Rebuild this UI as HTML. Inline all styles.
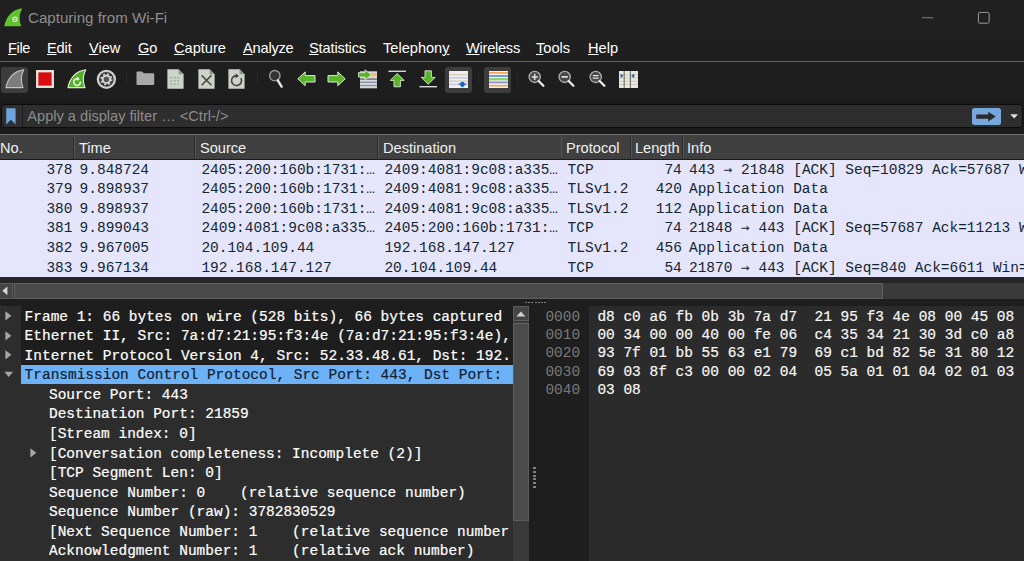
<!DOCTYPE html>
<html><head><meta charset="utf-8"><title>Capturing from Wi-Fi</title>
<style>
*{box-sizing:border-box;margin:0;padding:0}
html,body{width:1024px;height:561px;overflow:hidden;background:#1e1e1e}
body{position:relative;font-family:"Liberation Sans",sans-serif;color:#fff}
.abs{position:absolute}
svg{position:absolute;overflow:visible}
#title{left:0;top:0;width:1024px;height:34px;background:#202020}
#title .t{left:28px;top:9px;font-size:15.1px;color:#8e8e8e;white-space:nowrap}
#menu{left:0;top:34px;width:1024px;height:28px;background:#1f1f1f;border-bottom:1px solid #606060}
#menu span{position:absolute;top:6.1px;font-size:14.6px;color:#fff;white-space:nowrap}
#menu u{text-decoration:underline;text-underline-offset:1.2px;text-decoration-thickness:1px}
#tb{left:0;top:62px;width:1024px;height:38px;background:#1e1e1e}
.chk{position:absolute;background:#3d3d3d;border-radius:3px}
.sep{position:absolute;top:72px;width:1px;height:14px;background:#2a2a2a}
#fwrap{left:0;top:100px;width:1024px;height:34px;background:#1b1b1b}
#filter{left:1px;top:104px;width:1022px;height:24px;background:#2e2e2e;border:1px solid #0c0c0c;border-radius:4px}
#filter .ph{left:25.3px;top:3.3px;font-size:14.6px;color:#8c8c8c;white-space:nowrap}
.mono{font-family:"Liberation Mono",monospace}
#hdr{left:0;top:133.5px;width:1024px;height:26px;background:#404040;border-top:1px solid #707070;border-bottom:1.5px solid #1a1a1a}
#hdr span{position:absolute;top:5.8px;font-size:14.6px;color:#f0f0f0;white-space:nowrap}
#hdr i{position:absolute;top:1px;width:1.5px;height:22px;background:#2c2c2c;border-right:0.5px solid #555}
#list{left:0;top:160px;width:1024px;height:117px;background:#e6e5fe;overflow:hidden}
.row{position:absolute;left:0;width:1024px;height:19.6px;line-height:19.6px;font-size:14.47px;color:#12272e;white-space:pre}
.row>span{position:absolute;top:0.6px;white-space:pre}
.ar{font-family:"DejaVu Sans Mono",monospace;font-size:14.42px;line-height:0}
#hsbw{left:0;top:277px;width:1024px;height:6px;background:#262626}
#hsb{left:0;top:283px;width:1024px;height:15.5px;background:#3a3a3a}
#det{left:0;top:306.3px;width:513px;height:255px;background:#2d2d2d;overflow:hidden}
.top3{position:absolute;left:20.5px;top:0;width:500px;height:58.5px;background:#1e1e1e}
.selbg{position:absolute;left:20.5px;top:58.5px;width:500px;height:19.3px;background:#6db2f6}
.dl{position:absolute;overflow:hidden;height:19.5px;line-height:19.5px;font-size:14.47px;color:#fff;white-space:pre;margin-top:1.4px;-webkit-text-stroke:0.2px #fff}
.dl.sel{color:#14202e;-webkit-text-stroke:0.2px #14202e}
#vsb{left:513px;top:306px;width:16px;height:255px;background:#3a3a3a}
#hexoff{left:529px;top:306px;width:60px;height:255px;background:#1e1e1e}
#hex{left:589px;top:306px;width:435px;height:255px;background:#2b2b2b}
.hl{position:absolute;font-size:14.47px;line-height:18.3px;white-space:pre}
</style></head><body>
<div id="title" class="abs"><div class="abs t">Capturing from Wi-Fi</div>
<svg style="left:4px;top:8px" width="19" height="19" viewBox="0 0 19 19"><path d="M0.3 18.2 C2 9 8 1.5 18.3 0.2 C15 6 15 12 17.3 18.2 Z" fill="#5fc42b"/><circle cx="11" cy="11.3" r="2.2" fill="none" stroke="#dfe8d8" stroke-width="1.2"/><circle cx="11" cy="11.3" r="0.8" fill="#dfe8d8"/></svg>
<svg style="left:922px;top:16.5px" width="12" height="2" viewBox="0 0 12 2"><rect x="0" y="0.3" width="11.2" height="0.9" fill="#8c8c8c"/></svg>
<svg style="left:977px;top:11px" width="14" height="14" viewBox="0 0 14 14"><rect x="1.4" y="1.4" width="10.8" height="10.8" rx="1.6" fill="none" stroke="#9a9a9a" stroke-width="1"/></svg>
</div>
<div id="menu" class="abs">
<span style="left:8px;letter-spacing:-0.35px"><u>F</u>ile</span>
<span style="left:47px;letter-spacing:-0.15px"><u>E</u>dit</span>
<span style="left:89px"><u>V</u>iew</span>
<span style="left:138px"><u>G</u>o</span>
<span style="left:174px"><u>C</u>apture</span>
<span style="left:243px;letter-spacing:-0.2px"><u>A</u>nalyze</span>
<span style="left:309px;letter-spacing:-0.14px"><u>S</u>tatistics</span>
<span style="left:383px">Telephon<u>y</u></span>
<span style="left:466px;letter-spacing:-0.25px"><u>W</u>ireless</span>
<span style="left:536px"><u>T</u>ools</span>
<span style="left:588px"><u>H</u>elp</span>
</div>
<div id="tb" class="abs"></div>
<div class="chk" style="left:1px;top:67px;width:27px;height:26px"></div>
<div class="chk" style="left:445px;top:67px;width:27px;height:26px"></div>
<div class="chk" style="left:484px;top:67px;width:27px;height:26px"></div>
<div class="sep" style="left:126px"></div><div class="sep" style="left:257px"></div><div class="sep" style="left:478px"></div><div class="sep" style="left:517px"></div>
<!-- start capture (grey fin) -->
<svg style="left:5px;top:69px" width="20" height="20" viewBox="0 0 20 20"><path d="M1 18.6 C2.5 9.5 8.5 2.2 18.8 0.8 C15.6 6.5 15.6 12.5 18 18.6 Z" fill="#7d7d7d" stroke="#c4c4c4" stroke-width="1.1" stroke-linejoin="round"/></svg>
<!-- stop -->
<svg style="left:36.3px;top:70px" width="18" height="18" viewBox="0 0 18 18"><rect x="1.2" y="1.2" width="15.6" height="15.6" rx="0" fill="#d70f10" stroke="#eee6de" stroke-width="2.3"/></svg>
<!-- restart -->
<svg style="left:66.5px;top:69px" width="20" height="20" viewBox="0 0 20 20"><path d="M1 18.6 C2.5 9.5 8.5 2.2 18.8 0.8 C15.6 6.5 15.6 12.5 18 18.6 Z" fill="#52b027" stroke="#e8efe2" stroke-width="1.1" stroke-linejoin="round"/><path d="M13.4 12.4 A3.4 3.4 0 1 1 10.4 9.7" fill="none" stroke="#eef4ea" stroke-width="1.6"/><path d="M9.8 7.6 L12.9 9.9 L9.8 12Z" fill="#eef4ea"/></svg>
<!-- options gear -->
<svg style="left:96px;top:68.5px" width="21" height="21" viewBox="0 0 21 21"><circle cx="10.4" cy="10.3" r="8.5" fill="#333" stroke="#cfcfcf" stroke-width="2.3"/><circle cx="10.4" cy="10.3" r="3.7" fill="none" stroke="#cfcfcf" stroke-width="2.2"/><circle cx="10.4" cy="10.3" r="5.3" fill="none" stroke="#cfcfcf" stroke-width="1.5" stroke-dasharray="2.08 2.08"/><circle cx="10.4" cy="10.3" r="2.4" fill="#5e5555"/></svg>
<!-- open folder -->
<svg style="left:136px;top:71px" width="19" height="15" viewBox="0 0 19 15"><path d="M0.5 1.2 Q0.5 0.4 1.3 0.4 L6.2 0.4 L7.8 2.2 L17.4 2.2 Q18.2 2.2 18.2 3 L18.2 13 Q18.2 13.9 17.4 13.9 L1.3 13.9 Q0.5 13.9 0.5 13 Z" fill="#a9a9a9"/></svg>
<!-- save file -->
<svg style="left:167px;top:69px" width="17" height="20" viewBox="0 0 17 20"><path d="M0.4 0.3 L11.6 0.3 L16.6 5.3 L16.6 19.7 L0.4 19.7Z" fill="#cdd3cc"/><path d="M11.6 0.3 L11.6 5.3 L16.6 5.3Z" fill="#8e958e"/><g fill="#a3aaa3"><rect x="3" y="8" width="2.2" height="1.3"/><rect x="6.6" y="8" width="2.2" height="1.3"/><rect x="10.2" y="8" width="2.2" height="1.3"/><rect x="3" y="11.2" width="2.2" height="1.3"/><rect x="6.6" y="11.2" width="2.2" height="1.3"/><rect x="10.2" y="11.2" width="2.2" height="1.3"/><rect x="3" y="14.4" width="2.2" height="1.3"/><rect x="6.6" y="14.4" width="2.2" height="1.3"/><rect x="10.2" y="14.4" width="2.2" height="1.3"/></g></svg>
<!-- close file -->
<svg style="left:198px;top:69px" width="17" height="20" viewBox="0 0 17 20"><path d="M0.4 0.3 L11.6 0.3 L16.6 5.3 L16.6 19.7 L0.4 19.7Z" fill="#cdd3cc"/><path d="M11.6 0.3 L11.6 5.3 L16.6 5.3Z" fill="#8e958e"/><path d="M3.6 6.4 L13.4 16.2 M13.4 6.4 L3.6 16.2" stroke="#4a4444" stroke-width="1.5"/></svg>
<!-- reload file -->
<svg style="left:228px;top:69px" width="17" height="20" viewBox="0 0 17 20"><path d="M0.4 0.3 L11.6 0.3 L16.6 5.3 L16.6 19.7 L0.4 19.7Z" fill="#cdd3cc"/><path d="M11.6 0.3 L11.6 5.3 L16.6 5.3Z" fill="#8e958e"/><path d="M12.9 9.2 A5 5 0 1 1 8.4 6.6" fill="none" stroke="#4a4444" stroke-width="1.6"/><path d="M7.6 4.2 L11 6.9 L7.6 9.4Z" fill="#4a4444"/></svg>
<!-- find -->
<svg style="left:267px;top:68px" width="18" height="22" viewBox="0 0 18 22"><circle cx="7.8" cy="7.7" r="5.2" fill="#333" stroke="#9a9a9a" stroke-width="1.4"/><path d="M10.8 12.3 L14.6 18.6" stroke="#e6e6e6" stroke-width="2.4" stroke-linecap="round"/></svg>
<!-- back -->
<svg style="left:297px;top:71px" width="19" height="16" viewBox="0 0 19 16"><path d="M0.8 7.8 L8.2 0.9 L8.2 4.6 L18 4.6 L18 11 L8.2 11 L8.2 14.7Z" fill="#58b528" stroke="#dfe9d6" stroke-width="1"/></svg>
<!-- forward -->
<svg style="left:327px;top:71px" width="19" height="16" viewBox="0 0 19 16"><path d="M18.2 7.8 L10.8 0.9 L10.8 4.6 L1 4.6 L1 11 L10.8 11 L10.8 14.7Z" fill="#58b528" stroke="#dfe9d6" stroke-width="1"/></svg>
<!-- goto packet -->
<svg style="left:358px;top:69px" width="20" height="20" viewBox="0 0 20 20"><rect x="2" y="2.3" width="17" height="17" fill="#d9dad6"/><rect x="2" y="9.4" width="17" height="1.4" fill="#6d6d6d"/><rect x="2" y="12.6" width="17" height="1.4" fill="#8a8fb0"/><rect x="2" y="15.8" width="17" height="1.4" fill="#8a8fb0"/><rect x="12.6" y="4" width="6" height="3.2" fill="#f3c064"/><path d="M0.5 3.6 L7 3.6 L7 0.8 L13.4 5.8 L7 10.8 L7 8 L0.5 8Z" fill="#58b528" stroke="#dfe9d6" stroke-width="0.8"/></svg>
<!-- first -->
<svg style="left:388px;top:70px" width="19" height="18" viewBox="0 0 19 18"><rect x="0.4" y="0.6" width="17.6" height="1.4" fill="#d6d6d6"/><path d="M9.2 3.6 L16.2 10.4 L12.4 10.4 L12.4 16.8 L6 16.8 L6 10.4 L2.2 10.4Z" fill="#58b528" stroke="#dfe9d6" stroke-width="0.9"/></svg>
<!-- last -->
<svg style="left:419px;top:70px" width="19" height="18" viewBox="0 0 19 18"><rect x="0.4" y="16" width="17.6" height="1.4" fill="#d6d6d6"/><path d="M9.2 14.2 L16.2 7.4 L12.4 7.4 L12.4 0.8 L6 0.8 L6 7.4 L2.2 7.4Z" fill="#58b528" stroke="#dfe9d6" stroke-width="0.9"/></svg>
<!-- autoscroll -->
<svg style="left:448.5px;top:70.5px" width="19" height="17" viewBox="0 0 19 17"><rect x="0" y="0" width="19" height="17" fill="#ecebf6"/><rect x="0" y="3.2" width="19" height="1" fill="#c9c79a"/><rect x="0" y="6.4" width="19" height="1" fill="#b9b9cc"/><rect x="0" y="9.6" width="19" height="1" fill="#c9c79a"/><rect x="0" y="12.8" width="19" height="1" fill="#b9b9cc"/><path d="M9.2 12.6 L17.6 12.6 L13.4 16.6Z" fill="#1c62b8"/><rect x="11.6" y="11" width="3.6" height="2" fill="#1c62b8"/></svg>
<!-- colorize -->
<svg style="left:488.5px;top:70.5px" width="19" height="17" viewBox="0 0 19 17"><rect x="0" y="0" width="19" height="17" fill="#f2f1f4"/><rect x="0" y="1" width="19" height="1.8" fill="#f0a862"/><rect x="0" y="4.2" width="19" height="1.6" fill="#5a82c8"/><rect x="0" y="7" width="19" height="2.4" fill="#8ed06a"/><rect x="0" y="10.6" width="19" height="1.6" fill="#8d88c8"/><rect x="0" y="13.8" width="19" height="1.8" fill="#f0a862"/></svg>
<!-- zoom in/out/reset -->
<svg style="left:527px;top:69px" width="20" height="20" viewBox="0 0 20 20"><circle cx="7.7" cy="7.9" r="5.6" fill="#484848" stroke="#b0b0b0" stroke-width="1.3"/><path d="M11.6 12 L16.4 16.8" stroke="#ececec" stroke-width="2.3" stroke-linecap="round"/><path d="M4.6 7.9 L10.8 7.9 M7.7 4.8 L7.7 11" stroke="#e2e2e2" stroke-width="1.5"/></svg>
<svg style="left:556.7px;top:69px" width="20" height="20" viewBox="0 0 20 20"><circle cx="7.7" cy="7.9" r="5.6" fill="#484848" stroke="#b0b0b0" stroke-width="1.3"/><path d="M11.6 12 L16.4 16.8" stroke="#ececec" stroke-width="2.3" stroke-linecap="round"/><path d="M4.6 7.9 L10.8 7.9" stroke="#e2e2e2" stroke-width="1.7"/></svg>
<svg style="left:587.6px;top:69px" width="20" height="20" viewBox="0 0 20 20"><circle cx="7.7" cy="7.9" r="5.6" fill="#484848" stroke="#b0b0b0" stroke-width="1.3"/><path d="M11.6 12 L16.4 16.8" stroke="#ececec" stroke-width="2.3" stroke-linecap="round"/><path d="M4.8 6.6 L10.6 6.6 M4.8 9.2 L10.6 9.2" stroke="#e2e2e2" stroke-width="1.3"/></svg>
<!-- resize columns -->
<svg style="left:618.5px;top:70.5px" width="19" height="17" viewBox="0 0 19 17"><rect x="0" y="0" width="19" height="17" fill="#e9e9e4"/><g fill="#c5c5b4"><rect x="0" y="3.4" width="19" height="0.8"/><rect x="0" y="6.6" width="19" height="0.8"/><rect x="0" y="9.8" width="19" height="0.8"/><rect x="0" y="13" width="19" height="0.8"/></g><rect x="4.6" y="0" width="1.2" height="17" fill="#77776e"/><rect x="10.8" y="0" width="1.2" height="17" fill="#77776e"/><path d="M1.6 2.4 L4.4 4.8 L1.6 7.2Z" fill="#1c62b8"/><path d="M15.2 2.4 L12.2 4.8 L15.2 7.2Z" fill="#1c62b8"/></svg>

<div id="fwrap" class="abs"></div>
<div id="filter" class="abs"><div class="abs ph">Apply a display filter … &lt;Ctrl-/&gt;</div></div>
<svg style="left:6.2px;top:107.6px" width="10" height="17" viewBox="0 0 10 17"><path d="M0.2 0.2 L9.6 0.2 L9.6 16.4 L4.9 11.8 L0.2 16.4Z" fill="#6ea4de"/></svg>
<div class="abs" style="left:21.5px;top:105px;width:1.5px;height:22px;background:#1c1c1c"></div>
<div class="abs" style="left:972px;top:108px;width:29px;height:17px;background:#76a8de;border-radius:2.5px"></div>
<svg style="left:975px;top:110px" width="22" height="13" viewBox="0 0 22 13"><path d="M1.2 4.5 L13.2 4.5 L13.2 1.8 L20.8 6.6 L13.2 11.4 L13.2 8.8 L1.2 8.8Z" fill="#2b2b2b"/></svg>
<svg style="left:1010px;top:113.5px" width="9" height="5" viewBox="0 0 9 5"><path d="M0.3 0.3 L8 0.3 L4.15 4.6Z" fill="#e2e2e2"/></svg>

<div id="hdr" class="abs">
<span style="left:0px">No.</span><span style="left:79px">Time</span><span style="left:200px">Source</span><span style="left:383px">Destination</span><span style="left:566px">Protocol</span><span style="left:635px">Length</span><span style="left:687px">Info</span>
<i style="left:73px"></i><i style="left:194px"></i><i style="left:377px"></i><i style="left:560.5px"></i><i style="left:630px"></i><i style="left:682px"></i>
</div>
<div id="list" class="abs mono">
<div class="row" style="top:0.0px"><span style="left:46.4px">378</span><span style="left:79.6px">9.848724</span><span style="left:201.4px">2405:200:160b:1731:…</span><span style="left:384.4px">2409:4081:9c08:a335…</span><span style="left:567.6px">TCP</span><span style="left:664.4px">74</span><span style="left:689px">443 <span class="ar">→</span> 21848 [ACK] Seq=10829 Ack=57687 Win=501 Len=0</span></div>
<div class="row" style="top:19.6px"><span style="left:46.4px">379</span><span style="left:79.6px">9.898937</span><span style="left:201.4px">2405:200:160b:1731:…</span><span style="left:384.4px">2409:4081:9c08:a335…</span><span style="left:567.6px">TLSv1.2</span><span style="left:655.8px">420</span><span style="left:689px">Application Data</span></div>
<div class="row" style="top:39.2px"><span style="left:46.4px">380</span><span style="left:79.6px">9.898937</span><span style="left:201.4px">2405:200:160b:1731:…</span><span style="left:384.4px">2409:4081:9c08:a335…</span><span style="left:567.6px">TLSv1.2</span><span style="left:655.8px">112</span><span style="left:689px">Application Data</span></div>
<div class="row" style="top:58.8px"><span style="left:46.4px">381</span><span style="left:79.6px">9.899043</span><span style="left:201.4px">2409:4081:9c08:a335…</span><span style="left:384.4px">2405:200:160b:1731:…</span><span style="left:567.6px">TCP</span><span style="left:664.4px">74</span><span style="left:689px">21848 <span class="ar">→</span> 443 [ACK] Seq=57687 Ack=11213 Win=1022 Len=0</span></div>
<div class="row" style="top:78.4px"><span style="left:46.4px">382</span><span style="left:79.6px">9.967005</span><span style="left:201.4px">20.104.109.44</span><span style="left:384.4px">192.168.147.127</span><span style="left:567.6px">TLSv1.2</span><span style="left:655.8px">456</span><span style="left:689px">Application Data</span></div>
<div class="row" style="top:98.0px"><span style="left:46.4px">383</span><span style="left:79.6px">9.967134</span><span style="left:201.4px">192.168.147.127</span><span style="left:384.4px">20.104.109.44</span><span style="left:567.6px">TCP</span><span style="left:664.4px">54</span><span style="left:689px">21870 <span class="ar">→</span> 443 [ACK] Seq=840 Ack=6611 Win=1023 Len=0</span></div>
</div>
<div id="hsbw" class="abs"></div>
<div id="hsb" class="abs"></div>
<div id="det" class="abs mono">
<div class="top3"></div><div class="selbg"></div>
<svg class="abs" style="left:5.2px;top:4.9px" width="7" height="10" viewBox="0 0 7 10"><path d="M0.4 0.2 L6.4 4.8 L0.4 9.4Z" fill="#a6a6a6"/></svg>
<div class="dl" style="top:0.00px;left:24.6px;width:486.4px">Frame 1: 66 bytes on wire (528 bits), 66 bytes captured (528 bits) on interface</div>
<svg class="abs" style="left:5.2px;top:24.5px" width="7" height="10" viewBox="0 0 7 10"><path d="M0.4 0.2 L6.4 4.8 L0.4 9.4Z" fill="#a6a6a6"/></svg>
<div class="dl" style="top:19.55px;left:24.6px;width:486.4px">Ethernet II, Src: 7a:d7:21:95:f3:4e (7a:d7:21:95:f3:4e), Dst: d8:c0:a6:fb:0b:3b</div>
<svg class="abs" style="left:5.2px;top:44.0px" width="7" height="10" viewBox="0 0 7 10"><path d="M0.4 0.2 L6.4 4.8 L0.4 9.4Z" fill="#a6a6a6"/></svg>
<div class="dl" style="top:39.10px;left:24.6px;width:486.4px">Internet Protocol Version 4, Src: 52.33.48.61, Dst: 192.168.147.127</div>
<svg class="abs" style="left:4.0px;top:65.2px" width="10" height="8" viewBox="0 0 10 8"><path d="M0.3 0.8 L9.1 0.8 L4.7 6Z" fill="#a6a6a6"/></svg>
<div class="dl sel" style="top:58.65px;left:24.6px;width:486.4px">Transmission Control Protocol, Src Port: 443, Dst Port: 21859, Seq: 0, Ack: 1, Len: 0</div>
<div class="dl" style="top:78.20px;left:49.0px;width:462.0px">Source Port: 443</div>
<div class="dl" style="top:97.75px;left:49.0px;width:462.0px">Destination Port: 21859</div>
<div class="dl" style="top:117.30px;left:49.0px;width:462.0px">[Stream index: 0]</div>
<svg class="abs" style="left:29.6px;top:141.8px" width="7" height="10" viewBox="0 0 7 10"><path d="M0.4 0.2 L6.4 4.8 L0.4 9.4Z" fill="#a6a6a6"/></svg>
<div class="dl" style="top:136.85px;left:49.0px;width:462.0px">[Conversation completeness: Incomplete (2)]</div>
<div class="dl" style="top:156.40px;left:49.0px;width:462.0px">[TCP Segment Len: 0]</div>
<div class="dl" style="top:175.95px;left:49.0px;width:462.0px">Sequence Number: 0    (relative sequence number)</div>
<div class="dl" style="top:195.50px;left:49.0px;width:462.0px">Sequence Number (raw): 3782830529</div>
<div class="dl" style="top:215.05px;left:49.0px;width:462.0px">[Next Sequence Number: 1    (relative sequence number)]</div>
<div class="dl" style="top:234.60px;left:49.0px;width:462.0px">Acknowledgment Number: 1    (relative ack number)</div>
</div>
<div id="vsb" class="abs"></div>
<div id="hexoff" class="abs"></div>
<div id="hex" class="abs"></div>
<div class="hl mono" style="left:545.4px;top:307.7px;color:#797979">0000</div>
<div class="hl mono" style="left:597.4px;top:307.7px;color:#f8f8f8;-webkit-text-stroke:0.2px #f8f8f8">d8 c0 a6 fb 0b 3b 7a d7  21 95 f3 4e 08 00 45 08</div>
<div class="hl mono" style="left:545.4px;top:326.0px;color:#797979">0010</div>
<div class="hl mono" style="left:597.4px;top:326.0px;color:#f8f8f8;-webkit-text-stroke:0.2px #f8f8f8">00 34 00 00 40 00 fe 06  c4 35 34 21 30 3d c0 a8</div>
<div class="hl mono" style="left:545.4px;top:344.3px;color:#797979">0020</div>
<div class="hl mono" style="left:597.4px;top:344.3px;color:#f8f8f8;-webkit-text-stroke:0.2px #f8f8f8">93 7f 01 bb 55 63 e1 79  69 c1 bd 82 5e 31 80 12</div>
<div class="hl mono" style="left:545.4px;top:362.6px;color:#797979">0030</div>
<div class="hl mono" style="left:597.4px;top:362.6px;color:#f8f8f8;-webkit-text-stroke:0.2px #f8f8f8">69 03 8f c3 00 00 02 04  05 5a 01 01 04 02 01 03</div>
<div class="hl mono" style="left:545.4px;top:380.9px;color:#797979">0040</div>
<div class="hl mono" style="left:597.4px;top:380.9px;color:#f8f8f8;-webkit-text-stroke:0.2px #f8f8f8">03 08</div>
<div class="abs" style="left:0;top:283px;width:12.5px;height:15.5px;background:#454545;border:1px solid #5a5a5a;border-left:none"></div>
<svg style="left:2px;top:286px" width="6" height="10" viewBox="0 0 6 10"><path d="M5.4 0.4 L5.4 9.2 L0.4 4.8Z" fill="#d8d8d8"/></svg>
<div class="abs" style="left:13.5px;top:283px;width:869px;height:15.5px;background:#4a4a4a;border:1px solid #606060"></div>
<div class="abs" style="left:513px;top:306.3px;width:16px;height:15px;background:#454545;border:1px solid #5c5c5c"></div>
<svg style="left:516px;top:311px" width="10" height="6" viewBox="0 0 10 6"><path d="M0.4 5.4 L9.4 5.4 L4.9 0.6Z" fill="#d0d0d0"/></svg>
<div class="abs" style="left:513px;top:323px;width:16px;height:198px;background:#4b4b4b;border:1px solid #5c5c5c;border-top-color:#666"></div>
<div class="abs" style="left:524.5px;top:302px;width:21px;height:1.4px;background:repeating-linear-gradient(90deg,#808080 0 2px,transparent 2px 3.2px)"></div>
<div class="abs" style="left:532.5px;top:467px;width:3.4px;height:21px;background:repeating-linear-gradient(180deg,#808080 0 2px,transparent 2px 3.8px)"></div>

</body></html>
